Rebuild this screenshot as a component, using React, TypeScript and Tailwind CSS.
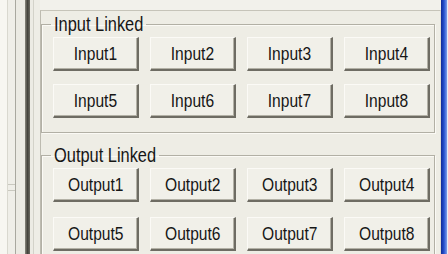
import React from "react";

const font = { fontFamily: '"Liberation Sans", Arial, sans-serif' };

// Tahoma-like narrow text: Liberation Sans squeezed horizontally
function Narrow({ children, className = "" }: { children: React.ReactNode; className?: string }) {
  return <span className={`inline-block whitespace-nowrap scale-x-[0.82] ${className}`}>{children}</span>;
}

function XpButton({ label }: { label: string }) {
  return (
    <button
      className="h-[34px] w-[86px] bg-[#f1f0e9] border-t border-l border-[#fbfaf6] border-r-2 border-b-2 border-r-[#6e6c63] border-b-[#6e6c63] shadow-[inset_-1px_-1px_0_#b3b1a6] text-[19px] leading-none text-[#161616] flex items-center justify-center overflow-hidden"
      style={font}
    >
      <Narrow className="origin-center">{label}</Narrow>
    </button>
  );
}

function GroupBox({
  title,
  prefix,
  legendW,
  rowGap,
}: {
  title: string;
  prefix: string;
  legendW: string;
  rowGap: string;
}) {
  return (
    <fieldset className="border border-[#b2b0a5] shadow-[inset_1px_1px_0_#fbfaf5,1px_1px_0_#fbfaf5]">
      <legend
        className={`ml-[9px] px-[3px] text-[20px] leading-[20px] text-[#161616] overflow-visible ${legendW}`}
        style={font}
      >
        <Narrow className="origin-left">{title}</Narrow>
      </legend>
      <div className={`grid grid-cols-[repeat(4,86px)] gap-x-[11px] ${rowGap} pl-[11px] pt-[3px] pb-[14px]`}>
        {[1, 2, 3, 4, 5, 6, 7, 8].map((n) => (
          <XpButton key={n} label={`${prefix}${n}`} />
        ))}
      </div>
    </fieldset>
  );
}

export default function App() {
  return (
    <div className="w-[448px] h-[254px] overflow-hidden flex bg-[#efeee7]">
      {/* left edge of the neighbouring pane */}
      <div className="w-[40px] h-full flex shrink-0">
        <div className="w-[7px] bg-[#f7f6f1]" />
        <div className="w-px bg-[#d9d8cf]" />
        <div className="w-[7px] bg-[#efeee8] flex flex-col pt-[184px] gap-[5px]">
          <div className="h-px bg-[#c9c8bf]" />
          <div className="h-px bg-[#c9c8bf]" />
        </div>
        <div className="w-px bg-[#a9a89f]" />
        <div className="w-[9px] bg-[#ebeae3]" />
        <div className="w-[5px] bg-linear-to-r from-[#8a897f] via-[#45443d] to-[#6b6a61]" />
        <div className="w-[3px] bg-[#ecebe4]" />
        <div className="w-px bg-[#d3d2c9]" />
        <div className="w-[6px] bg-[#eeede6]" />
      </div>

      <div className="w-[401px] h-full pt-[10px] shrink-0 bg-[#f2f1eb]">
        <div className="h-full border-t border-l border-r border-t-[#c6c4b9] border-l-[#bdbbb0] border-r-[#dcdad0] bg-[#eeede5] pt-[3px] pr-[5px] flex flex-col gap-[12px]">
          <GroupBox title="Input Linked" prefix="Input" legendW="w-[95px]" rowGap="gap-y-[13px]" />
          <GroupBox title="Output Linked" prefix="Output" legendW="w-[108px]" rowGap="gap-y-[15px]" />
        </div>
      </div>

      <div className="w-[6px] h-full bg-linear-to-r from-[#102a96] via-[#2550d0] to-[#7f9be6]" />
      <div className="flex-1 h-full bg-[#e6ecf7]" />
    </div>
  );
}
